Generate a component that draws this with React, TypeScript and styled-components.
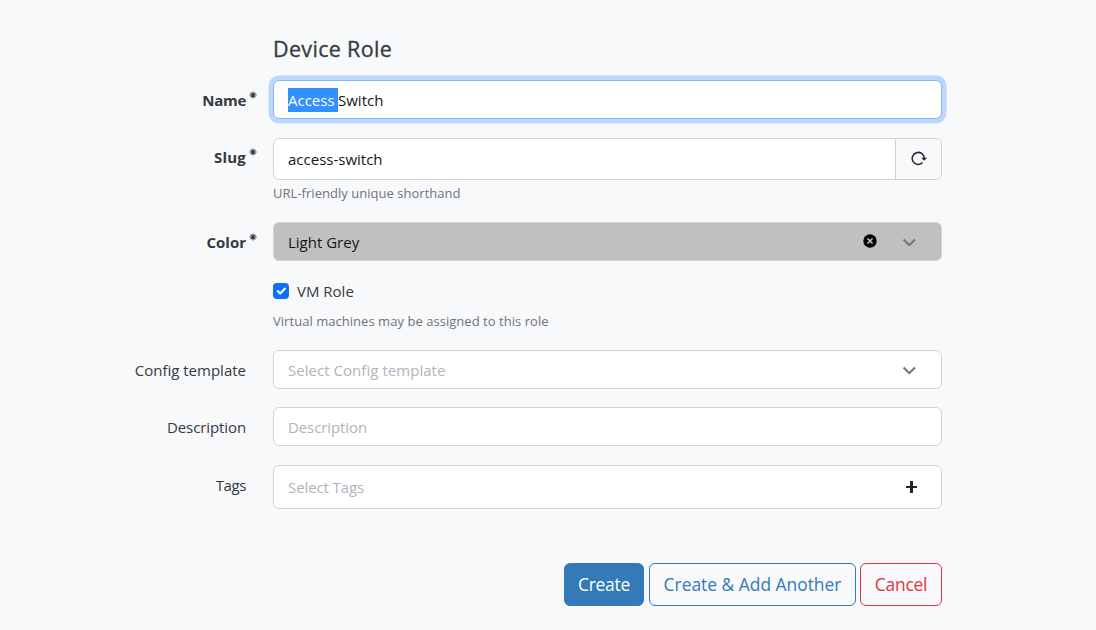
import React from "react";
import styled, { createGlobalStyle, css } from "styled-components";

const GlobalStyle = createGlobalStyle`
  * { box-sizing: border-box; }
  body {
    margin: 0;
    background: #f8f9fb;
    color: #343a40;
    font: 400 15px/24px "Open Sans", "Noto Sans", sans-serif;
  }
`;

const Form = styled.form`
  width: 942px;
  height: 630px;
  padding-top: 33px;
`;

const Title = styled.h5`
  margin: 0 0 15px 273px;
  font-size: 21.5px;
  line-height: 32px;
  font-weight: 500;
  letter-spacing: 0.33px;
  -webkit-text-stroke: 0.3px #343a40;
`;

const Row = styled.div<{ $gap?: number }>`
  display: grid;
  grid-template-columns: 246px 669px;
  column-gap: 27px;
  margin-bottom: ${(p) => p.$gap ?? 18}px;
`;

const Label = styled.label<{ $required?: boolean; $top?: number; $track?: number }>`
  position: relative;
  height: 24px;
  margin-top: ${(p) => p.$top ?? 8}px;
  text-align: right;
  letter-spacing: ${(p) => p.$track ?? 0}px;
  ${(p) => p.$required && css`font-weight: 700;`}
`;

const Required = styled.svg`
  position: absolute;
  left: 249px;
  top: 3px;
  width: 8px;
  height: 8px;
`;

const Control = styled.div<{ $height?: number; $focused?: boolean; $fill?: string }>`
  display: flex;
  align-items: center;
  height: ${(p) => p.$height ?? 39}px;
  padding-left: 14px;
  border: 1px solid ${(p) => (p.$focused ? "#86b7fe" : "#ced4da")};
  border-radius: 6px;
  overflow: hidden;
  background: ${(p) => p.$fill ?? "#fff"};
  ${(p) => p.$focused && css`box-shadow: 0 0 0 4.5px #bdd7fc;`}
`;

const Value = styled.span<{ $placeholder?: boolean; $track?: number; $top?: number }>`
  flex: 1;
  padding-top: ${(p) => p.$top ?? 1}px;
  white-space: pre;
  color: ${(p) => (p.$placeholder ? "#adb5bd" : "#141619")};
  letter-spacing: ${(p) => p.$track ?? 0}px;
`;

const Selection = styled.span`
  display: inline-block;
  width: 50px;
  height: 24px;
  background: #3390ff;
  color: #fff;
  vertical-align: top;
`;

const RefreshButton = styled.button`
  display: flex;
  align-items: center;
  justify-content: center;
  width: 46px;
  height: 100%;
  padding: 0 0 2px;
  border: 0;
  border-left: 1px solid #ced4da;
  background: #f8f9fa;
`;

const Icon = styled.svg<{ $right: number; $top?: number }>`
  flex: none;
  margin-top: ${(p) => p.$top ?? 0}px;
  margin-right: ${(p) => p.$right}px;
`;

const Help = styled.small<{ $top: number; $track?: number }>`
  display: block;
  margin-top: ${(p) => p.$top}px;
  font-size: 13px;
  line-height: 18px;
  color: #6c757d;
  letter-spacing: ${(p) => p.$track ?? 0}px;
`;

const CheckLine = styled.label`
  grid-column: 2;
  display: flex;
  align-items: center;
  gap: 8px;
  height: 24px;
`;

const CheckBox = styled.span`
  display: flex;
  width: 16px;
  height: 16px;
  border-radius: 4px;
  background: #0d6efd;
`;

const Field = styled.div`
  grid-column: 2;
`;

const Actions = styled.div`
  display: flex;
  justify-content: flex-end;
  gap: 4px;
  margin-top: 54px;
`;

const Button = styled.button<{ $color: string; $solid?: boolean; $width: number; $track?: number }>`
  width: ${(p) => p.$width}px;
  height: 43px;
  padding: 0 0 1px;
  border: 1px solid ${(p) => p.$color};
  border-radius: 6px;
  background: ${(p) => (p.$solid ? p.$color : "transparent")};
  color: ${(p) => (p.$solid ? "#fff" : p.$color)};
  font: 400 17.4px/28px "Open Sans", "Noto Sans", sans-serif;
  letter-spacing: ${(p) => p.$track ?? 0}px;
  white-space: nowrap;
  &:first-child { margin-right: 1px; }
`;

const Asterisk = () => (
  <Required viewBox="0 0 8 8" stroke="#343a40" strokeWidth="1.05">
    <path d="M4 .4v7.2M.4 4h7.2M1.6 1.6l4.8 4.8M6.4 1.6l-4.8 4.8" />
  </Required>
);

const Chevron = ({ top = 1 }: { top?: number }) => (
  <Icon $right={25} $top={top} width="14" height="9" viewBox="0 0 14 9" fill="none" stroke="#6c757d" strokeWidth="2">
    <path d="M1.6 1.5 7.3 7.1 13 1.5" />
  </Icon>
);

export default function App() {
  return (
    <>
      <GlobalStyle />
      <Form>
        <Title>Device Role</Title>
        <Row $gap={19}>
          <Label $required $track={-0.3}>Name<Asterisk /></Label>
          <Control $focused>
            <Value><Selection>Access</Selection>Switch</Value>
          </Control>
        </Row>
        <Row $gap={20}>
          <Label $required $top={7} $track={0.2}>Slug<Asterisk /></Label>
          <Field>
            <Control $height={42}>
              <Value $top={0}>access-switch</Value>
              <RefreshButton type="button">
                <svg width="16" height="16" viewBox="0 0 16 16" fill="none" stroke="#212529" strokeWidth="1.5">
                  <path d="M11.6 12.5A6 6 0 1 1 13.2 8v1" />
                  <path d="M10.2 7.8h5.8L13.1 10.8z" fill="#212529" stroke="none" />
                </svg>
              </RefreshButton>
            </Control>
            <Help $top={4} $track={0.03}>URL-friendly unique shorthand</Help>
          </Field>
        </Row>
        <Row>
          <Label $required>Color<Asterisk /></Label>
          <Control $fill="#c0c0c0">
            <Value>Light Grey</Value>
            <Icon $right={25} $top={-2} width="14" height="14" viewBox="0 0 14 14">
              <circle cx="7" cy="7" r="6.7" fill="#000" />
              <path d="m4.5 4.5 5 5m0-5-5 5" stroke="#c0c0c0" strokeWidth="1.7" />
            </Icon>
            <Chevron />
          </Control>
        </Row>
        <Row $gap={20}>
          <CheckLine>
            <CheckBox>
              <svg width="16" height="16" viewBox="0 0 20 20" fill="none">
                <path d="m6 10 3 3 6-6" stroke="#fff" strokeWidth="2.6" strokeLinecap="round" strokeLinejoin="round" />
              </svg>
            </CheckBox>
            VM Role
          </CheckLine>
          <Field><Help $top={9} $track={0.04}>Virtual machines may be assigned to this role</Help></Field>
        </Row>
        <Row>
          <Label>Config template</Label>
          <Control><Value $placeholder $track={0.04}>Select Config template</Value><Chevron top={2} /></Control>
        </Row>
        <Row $gap={19}>
          <Label $track={-0.1}>Description</Label>
          <Control><Value $placeholder $track={-0.1}>Description</Value></Control>
        </Row>
        <Row $gap={0}>
          <Label $track={-0.4}>Tags</Label>
          <Control $height={44}>
            <Value $placeholder $track={-0.1} $top={0}>Select Tags</Value>
            <Icon $right={24} width="11" height="12" viewBox="0 0 11 12">
              <path d="M4 0h3v5h4v2H7v5H4V7H0V5h4z" fill="#212529" />
            </Icon>
          </Control>
        </Row>
        <Actions>
          <Button type="button" $solid $color="#337ab7" $width={80} $track={-0.25}>Create</Button>
          <Button type="button" $color="#337ab7" $width={207}>Create &amp; Add Another</Button>
          <Button type="button" $color="#dc3545" $width={82} $track={-0.2}>Cancel</Button>
        </Actions>
      </Form>
    </>
  );
}
